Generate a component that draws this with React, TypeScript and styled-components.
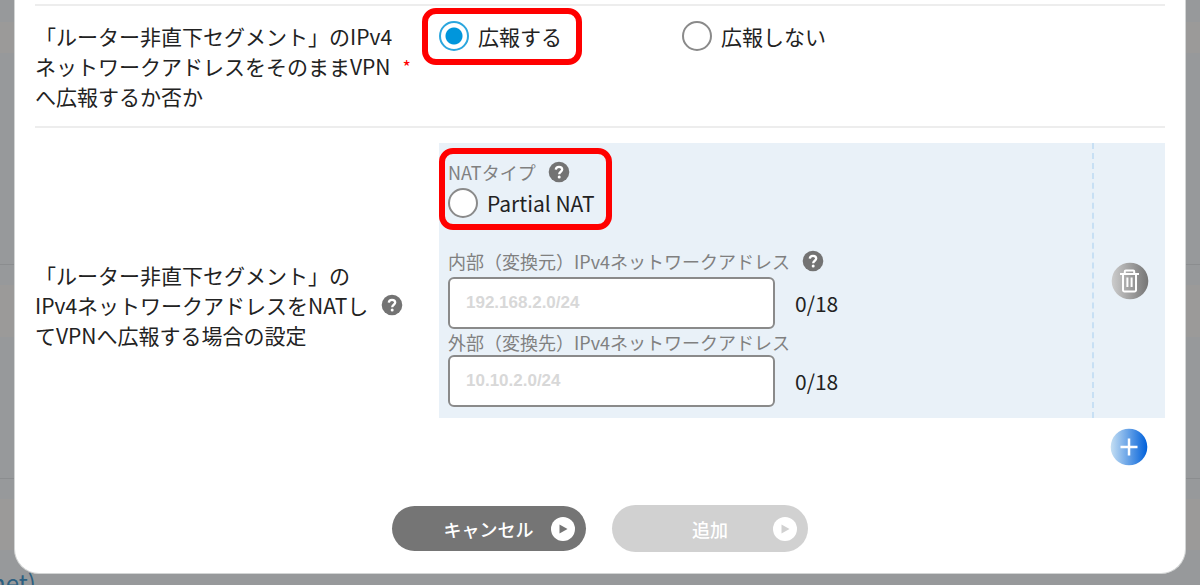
import React, { useState } from "react";
import styled, { createGlobalStyle } from "styled-components";

const GlobalStyle = createGlobalStyle`
  *, *::before, *::after { box-sizing: border-box; }
  body {
    margin: 0;
    background: #97999b;
    color: #222;
    font-family: "Noto Sans CJK JP", "Noto Sans", sans-serif;
    font-size: 21px;
    line-height: 30px;
    overflow: hidden;
  }
  button, input { font: inherit; color: inherit; }
`;

const Screen = styled.div`
  position: relative;
  padding: 0 14px 11px;
`;

/* Dimmed page that stays visible around the dialog */
const Backdrop = styled.div`
  position: absolute;
  inset: 0;
  display: flex;
  flex-direction: column;
  overflow: hidden;
`;

const Strip = styled.div<{ $height: number; $soft?: boolean; $line?: boolean }>`
  flex: 0 0 ${(p) => p.$height}px;
  background: ${(p) => (p.$soft ? "#9b9a99" : "#97999b")};
  border-bottom: ${(p) => (p.$line ? "1px solid #8b8d8f" : "0")};
`;

const BackdropLink = styled.a`
  padding-top: 17px;
  margin-left: -9px;
  color: #2d5f80;
  font-size: 24px;
  text-decoration: none;
  white-space: nowrap;
`;

const Dialog = styled.form`
  position: relative;
  padding: 4px 20px 21px;
  background: #fff;
  border: 1px solid #d3d5d5;
  border-width: 0 1px 1px;
  border-radius: 0 0 25px 25px;
`;

const Row = styled.section<{ $center?: boolean }>`
  display: grid;
  grid-template-columns: 376px 1fr;
  column-gap: 28px;
  align-items: ${(p) => (p.$center ? "center" : "start")};
  padding: 15px 0;
  border-top: 2px solid #ededed;
`;

const RowTitle = styled.div<{ $inset?: boolean }>`
  display: flex;
  align-items: center;
  justify-content: space-between;
  padding-right: ${(p) => (p.$inset ? 8 : 0)}px;
`;

const Required = styled.span`
  color: #f00;
  font-size: 18px;
`;

const Choices = styled.div`
  display: flex;
  gap: 120px;
`;

const Choice = styled.label`
  display: flex;
  align-items: center;
  gap: 9px;
`;

const Radio = styled.input`
  appearance: none;
  flex: none;
  width: 30px;
  height: 30px;
  margin: 0;
  border: 2px solid #8a8a8a;
  border-radius: 50%;
  background: #fff;
  &:checked {
    border-color: #2ba6de;
    background: radial-gradient(circle, #0096dc 0 8px, #fff 9px);
  }
`;

const Highlight = styled.div<{ $inner?: boolean }>`
  position: relative;
  &::after {
    content: "";
    position: absolute;
    inset: ${(p) => (p.$inner ? "-7px -17px -12px -9px" : "-13px -20px -14px -17px")};
    border: 6px solid #f00;
    border-radius: 14px;
    pointer-events: none;
  }
`;

const Settings = styled.div`
  display: flex;
  background: #e9f1f8;
`;

const Fields = styled.div`
  flex: 1;
  display: flex;
  flex-direction: column;
  align-items: flex-start;
  padding: 12px 9px 11px;
`;

const Side = styled.div`
  flex: 0 0 73px;
  display: flex;
  align-items: center;
  justify-content: center;
  border-left: 2px dashed #c8e0f4;
`;

const Caption = styled.div<{ $spaced?: boolean }>`
  display: flex;
  align-items: center;
  gap: 12px;
  margin-bottom: ${(p) => (p.$spaced ? 3 : 0)}px;
  color: #808080;
  font-size: 18px;
  line-height: 26px;
`;

const NatType = styled(Highlight)`
  padding-top: 4px;
  margin-bottom: 30px;
`;

const FieldRow = styled.div`
  display: flex;
  align-items: center;
  gap: 20px;
`;

const TextBox = styled.input`
  width: 327px;
  height: 52px;
  padding: 0 16px;
  border: 2px solid #8a8a8a;
  border-radius: 6px;
  background: #fff;
  font-family: "Liberation Sans", Arial, sans-serif;
  font-size: 17px;
  &::placeholder { color: #d8d8d8; opacity: 1; font-weight: 700; }
`;

const RoundButton = styled.button`
  display: block;
  width: 38px;
  height: 38px;
  padding: 0;
  border: 0;
  background: none;
  svg { display: block; }
`;

const AddLine = styled.div`
  display: flex;
  justify-content: flex-end;
  padding: 10px 17px 0 0;
`;

const HelpButton = styled.button`
  flex: none;
  width: 22px;
  height: 22px;
  padding: 0;
  border: 0;
  background: none;
  svg { display: block; }
`;

const Actions = styled.div`
  display: flex;
  align-items: center;
  justify-content: center;
  gap: 26px;
  padding-top: 24px;
`;

const Pill = styled.button<{ $tall?: boolean }>`
  display: grid;
  grid-template-columns: 1fr 24px;
  align-items: center;
  width: ${(p) => (p.$tall ? 196 : 194)}px;
  height: ${(p) => (p.$tall ? 47 : 45)}px;
  padding: 0 11px 0 ${(p) => (p.$tall ? 35 : 34)}px;
  border: 0;
  border-radius: 24px;
  background: ${(p) => (p.$tall ? "#d1d1d1" : "#757575")};
  color: #fff;
  font-size: 18px;
  font-weight: 500;
`;

const Help = () => (
  <HelpButton type="button" aria-label="ヘルプ">
    <svg width="22" height="22" viewBox="0 0 22 22">
      <circle cx="11" cy="11" r="10.3" fill="#737373" />
      <path d="M7.8 8.6C7.9 6.8 9.2 5.8 11 5.8c1.9 0 3.2 1.1 3.2 2.7 0 2.2-3 2.3-3 4.7" fill="none" stroke="#fff" strokeWidth="2.3" />
      <circle cx="11.2" cy="16" r="1.5" fill="#fff" />
    </svg>
  </HelpButton>
);

const Play = ({ color }: { color: string }) => (
  <svg width="24" height="24" viewBox="0 0 24 24" aria-hidden="true">
    <circle cx="12" cy="12" r="12" fill="#fff" />
    <path d="M8.5 7.5 16.5 12l-8 4.500z" fill={color} />
  </svg>
);

export default function App() {
  const [announce, setAnnounce] = useState("yes");
  const [inner, setInner] = useState("");
  const [outer, setOuter] = useState("");

  return (
    <>
      <GlobalStyle />
      <Screen>
        <Backdrop>
          <Strip $height={22} />
          <Strip $height={31} $soft />
          <Strip $height={212} $line />
          <Strip $height={20} />
          <Strip $height={52} $soft />
          <Strip $height={142} $line />
          <Strip $height={20} />
          <Strip $height={51} $soft />
          <BackdropLink href="#">net)</BackdropLink>
        </Backdrop>
        <Dialog onSubmit={(e) => e.preventDefault()}>
          <Row role="radiogroup" aria-labelledby="announce-title">
            <RowTitle>
              <span id="announce-title">
                「ルーター非直下セグメント」のIPv4
                <br />
                ネットワークアドレスをそのままVPN
                <br />
                へ広報するか否か
              </span>
              <Required>*</Required>
            </RowTitle>
            <Choices>
              <Highlight>
                <Choice>
                  <Radio type="radio" name="announce" checked={announce === "yes"} onChange={() => setAnnounce("yes")} />
                  広報する
                </Choice>
              </Highlight>
              <Choice>
                <Radio type="radio" name="announce" checked={announce === "no"} onChange={() => setAnnounce("no")} />
                広報しない
              </Choice>
            </Choices>
          </Row>
          <Row $center>
            <RowTitle $inset>
              <span>
                「ルーター非直下セグメント」の
                <br />
                IPv4ネットワークアドレスをNATし
                <br />
                てVPNへ広報する場合の設定
              </span>
              <Help />
            </RowTitle>
            <div>
              <Settings>
                <Fields>
                  <NatType $inner>
                    <Caption $spaced>
                      NATタイプ
                      <Help />
                    </Caption>
                    <Choice>
                      <Radio type="radio" name="nat" />
                      Partial NAT
                    </Choice>
                  </NatType>
                  <Caption $spaced>
                    <label htmlFor="inner">内部（変換元）IPv4ネットワークアドレス</label>
                    <Help />
                  </Caption>
                  <FieldRow>
                    <TextBox id="inner" placeholder="192.168.2.0/24" maxLength={18} value={inner} onChange={(e) => setInner(e.target.value)} />
                    <span>{inner.length}/18</span>
                  </FieldRow>
                  <Caption>
                    <label htmlFor="outer">外部（変換先）IPv4ネットワークアドレス</label>
                  </Caption>
                  <FieldRow>
                    <TextBox id="outer" placeholder="10.10.2.0/24" maxLength={18} value={outer} onChange={(e) => setOuter(e.target.value)} />
                    <span>{outer.length}/18</span>
                  </FieldRow>
                </Fields>
                <Side>
                  <RoundButton type="button" aria-label="削除">
                    <svg width="38" height="38" viewBox="0 0 38 38">
                      <defs>
                        <linearGradient id="gray">
                          <stop offset="0" stopColor="#ccc" />
                          <stop offset="1" stopColor="#757575" />
                        </linearGradient>
                      </defs>
                      <circle cx="19" cy="19" r="18.3" fill="url(#gray)" />
                      <g fill="none" stroke="#fff" strokeWidth="2">
                        <path d="M9 12h19M13.8 11.500V9.500a1 1 0 0 1 1-1h7.400a1 1 0 0 1 1 1v2M12 12v16a1.500 1.500 0 0 0 1.500 1.500h10a1.500 1.500 0 0 0 1.500-1.500V12" />
                        <path d="M16.400 15.500v9.500M20.600 15.500v9.500" />
                      </g>
                    </svg>
                  </RoundButton>
                </Side>
              </Settings>
              <AddLine>
                <RoundButton type="button" aria-label="行を追加">
                  <svg width="38" height="38" viewBox="0 0 38 38">
                    <defs>
                      <linearGradient id="blue">
                        <stop offset="0" stopColor="#c5dff3" />
                        <stop offset="1" stopColor="#0060da" />
                      </linearGradient>
                    </defs>
                    <circle cx="19" cy="19" r="18.3" fill="url(#blue)" />
                    <path d="M10.500 19h17M19 10.500v17" stroke="#fff" strokeWidth="2.500" />
                  </svg>
                </RoundButton>
              </AddLine>
            </div>
          </Row>
          <Actions>
            <Pill type="button">
              キャンセル
              <Play color="#757575" />
            </Pill>
            <Pill type="submit" $tall disabled>
              追加
              <Play color="#d1d1d1" />
            </Pill>
          </Actions>
        </Dialog>
      </Screen>
    </>
  );
}
